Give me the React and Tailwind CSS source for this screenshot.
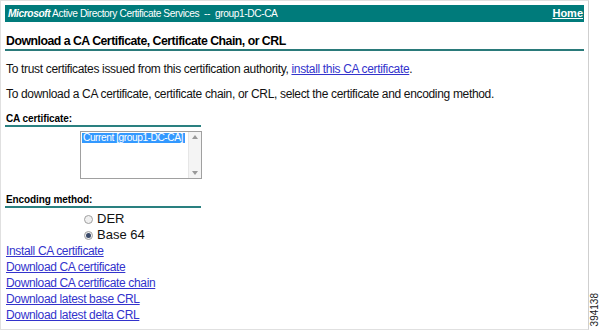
import React from "react";

const links = [
  "Install CA certificate",
  "Download CA certificate",
  "Download CA certificate chain",
  "Download latest base CRL",
  "Download latest delta CRL",
];

function Radio({ checked, label }) {
  return (
    <label className="flex items-center gap-[4px] h-[16px]">
      <span className="w-[9px] h-[9px] rounded-full border border-[#a0a0a0] bg-[#f0f0f0] flex items-center justify-center">
        {checked && <span className="w-[5px] h-[5px] rounded-full bg-[#3a4a6a]" />}
      </span>
      <span className="text-[13px] leading-[16px] text-[#111]">{label}</span>
    </label>
  );
}

export default function App() {
  return (
    <div className="w-[600px] h-[332px] bg-white flex font-['Liberation_Sans',Arial,sans-serif] overflow-hidden">
      <div className="w-[589px] h-[330px] border border-[#e0e0e0] border-r-[#cfcfcf] px-[4px] pt-[4px] flex flex-col">
        {/* Header */}
        <div className="h-[17px] bg-[#007b7b] flex items-center justify-between pl-[3px] pr-[1px] text-white text-[10.2px] tracking-[-0.4px]">
          <span className="whitespace-nowrap">
            <b className="italic">Microsoft</b> Active Directory Certificate Services &nbsp;-- &nbsp;group1-DC-CA
          </span>
          <a className="font-bold underline text-[11px] tracking-normal">Home</a>
        </div>

        <div className="mt-[12px] text-[12.3px] font-bold text-black leading-[15px] pl-[1px] tracking-[-0.5px]">
          Download a CA Certificate, Certificate Chain, or CRL
        </div>
        <div className="h-[2px] bg-[#2a7a7a]" />

        <p className="mt-[11px] text-[12px] text-[#111] leading-[14px] pl-[1px] tracking-[-0.33px]">
          To trust certificates issued from this certification authority,{" "}
          <a className="text-[#3333cc] underline">install this CA certificate</a>.
        </p>
        <p className="mt-[11px] text-[12px] text-[#111] leading-[14px] pl-[1px] tracking-[-0.33px]">
          To download a CA certificate, certificate chain, or CRL, select the certificate and encoding method.
        </p>

        <div className="mt-[11px] w-[196px]">
          <div className="text-[10px] font-bold text-black leading-[13px] pl-[1px] tracking-[-0.1px]">CA certificate:</div>
          <div className="h-[2px] bg-[#2a8080]" />
        </div>

        <div className="ml-[75px] mt-[4px] w-[122px] h-[48px] border border-[#a0a0a0] flex">
          <div className="flex-1 p-[1px] min-w-0">
            <div className="bg-[#3399ff] text-white text-[10.2px] leading-[10px] h-[10px] pl-[1px] w-fit pr-[2px] whitespace-nowrap tracking-[-0.45px]">
              Current [group1-DC-CA]
            </div>
          </div>
          <div className="w-[13px] bg-[#f4f4f4] border-l border-[#e6e6e6] flex flex-col justify-between items-center py-[3px]">
            <svg width="6" height="4" viewBox="0 0 6 4"><path d="M0 4 L3 0 L6 4Z" fill="#999" /></svg>
            <svg width="6" height="4" viewBox="0 0 6 4"><path d="M0 0 L3 4 L6 0Z" fill="#999" /></svg>
          </div>
        </div>

        <div className="mt-[15px] w-[196px]">
          <div className="text-[10px] font-bold text-black leading-[12px] pl-[1px] tracking-[-0.1px]">Encoding method:</div>
          <div className="h-[2px] bg-[#2a8080]" />
        </div>

        <div className="ml-[79px] mt-[3px] flex flex-col">
          <Radio label="DER" />
          <Radio checked label="Base 64" />
        </div>

        <div className="flex flex-col pl-[1px]">
          {links.map((l) => (
            <a key={l} className="text-[12px] leading-[16px] text-[#3333cc] underline w-fit tracking-[-0.35px]">
              {l}
            </a>
          ))}
        </div>
      </div>
      <div className="flex-1 flex items-end justify-center pb-[6px]">
        <span className="text-[10px] text-[#222] [writing-mode:vertical-rl] rotate-180 leading-[10px]">394138</span>
      </div>
    </div>
  );
}
